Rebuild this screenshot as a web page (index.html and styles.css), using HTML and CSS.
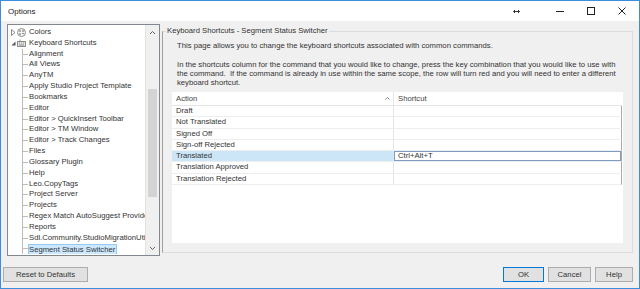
FILE: index.html
```html
<!DOCTYPE html>
<html lang="en">
<head>
    <meta charset="UTF-8">
    <meta name="viewport" content="width=device-width, initial-scale=1.0">
    <title>Options</title>
    <link rel="stylesheet" href="styles.css">
</head>
<body>
    <div class="window">
        <div class="titlebar">
            <span class="title">Options</span>
            <span class="pin">
                <svg width="7" height="5" viewBox="0 0 7 5"><path d="M0.5 2.5h6M2 1L0.5 2.5 2 4M5 1l1.5 1.5L5 4" stroke="#333" fill="none"/></svg>
            </span>
            <span class="cap-btn">
                <svg width="8" height="8" viewBox="0 0 8 8"><path d="M0 4.5h8" stroke="#222"/></svg>
            </span>
            <span class="cap-btn">
                <svg width="8" height="8" viewBox="0 0 8 8"><rect x="0.5" y="0.5" width="7" height="7" stroke="#222" fill="none"/></svg>
            </span>
            <span class="cap-btn">
                <svg width="8" height="8" viewBox="0 0 8 8"><path d="M0.5 0.5l7 7M7.5 0.5l-7 7" stroke="#222"/></svg>
            </span>
        </div>

        <div class="main">
            <div class="tree">
                <ul class="tree-list">
                    <li class="node">
                        <span class="exp"><svg width="5" height="7" viewBox="0 0 5 7"><path d="M0.5 0.5L4 3.5 0.5 6.5Z" stroke="#8a8a8a" fill="none"/></svg></span>
                        <span class="ico"><svg width="9" height="9" viewBox="0 0 9 9"><circle cx="4.5" cy="4.5" r="4" stroke="#8c8c8c" fill="#f4f4f4"/><circle cx="3" cy="3" r="0.9" fill="#8c8c8c"/><circle cx="6" cy="3" r="0.9" fill="#8c8c8c"/><circle cx="3" cy="6" r="0.9" fill="#8c8c8c"/><path d="M5 5.5h2" stroke="#8c8c8c"/></svg></span>
                        <span>Colors</span>
                    </li>
                    <li class="node">
                        <span class="exp"><svg width="5" height="7" viewBox="0 0 5 7"><path d="M4.5 1.5V5.5H0.5Z" fill="#555"/></svg></span>
                        <span class="ico"><svg width="9" height="8" viewBox="0 0 9 8"><path d="M3 0.5v2" stroke="#999"/><rect x="0.5" y="2.5" width="8" height="5" stroke="#8c8c8c" fill="#e6e6e6"/><path d="M2 4h1M4 4h1M6 4h1M2 6h5" stroke="#8c8c8c"/></svg></span>
                        <span>Keyboard Shortcuts</span>
                    </li>
                    <li class="leaf">Alignment</li>
                    <li class="leaf">All Views</li>
                    <li class="leaf">AnyTM</li>
                    <li class="leaf">Apply Studio Project Template</li>
                    <li class="leaf">Bookmarks</li>
                    <li class="leaf">Editor</li>
                    <li class="leaf">Editor &gt; QuickInsert Toolbar</li>
                    <li class="leaf">Editor &gt; TM Window</li>
                    <li class="leaf">Editor &gt; Track Changes</li>
                    <li class="leaf">Files</li>
                    <li class="leaf">Glossary Plugin</li>
                    <li class="leaf">Help</li>
                    <li class="leaf">Leo.CopyTags</li>
                    <li class="leaf">Project Server</li>
                    <li class="leaf">Projects</li>
                    <li class="leaf">Regex Match AutoSuggest Provider</li>
                    <li class="leaf">Reports</li>
                    <li class="leaf">Sdl.Community.StudioMigrationUtility</li>
                    <li class="leaf selected"><span class="sel">Segment Status Switcher</span></li>
                </ul>
                <div class="vscroll">
                    <div class="arrow">
                        <svg width="5" height="3" viewBox="0 0 5 3"><path d="M0 3L2.5 0.5 5 3" stroke="#606060" fill="none"/></svg>
                    </div>
                    <div class="track"><div class="thumb"></div></div>
                    <div class="arrow">
                        <svg width="5" height="3" viewBox="0 0 5 3"><path d="M0 0L2.5 2.5 5 0" stroke="#606060" fill="none"/></svg>
                    </div>
                </div>
            </div>

            <fieldset class="page">
                <legend>Keyboard Shortcuts - Segment Status Switcher</legend>
                <p class="intro">This page allows you to change the keyboard shortcuts associated with common commands.</p>
                <p class="help">In the shortcuts column for the command that you would like to change, press the key combination that you would like to use with<br>the command.&nbsp; If the command is already in use within the same scope, the row will turn red and you will need to enter a different<br>keyboard shortcut.</p>
                <div class="grid">
                    <table>
                        <thead>
                            <tr>
                                <th class="act">Action<svg class="sort" width="5" height="3" viewBox="0 0 5 3"><path d="M0.5 2.5L2.5 0.5 4.5 2.5" stroke="#888" fill="none"/></svg></th>
                                <th class="key">Shortcut</th>
                            </tr>
                        </thead>
                        <tbody>
                            <tr><td class="act">Draft</td><td class="key"></td></tr>
                            <tr><td class="act">Not Translated</td><td class="key"></td></tr>
                            <tr><td class="act">Signed Off</td><td class="key"></td></tr>
                            <tr><td class="act">Sign-off Rejected</td><td class="key"></td></tr>
                            <tr class="current"><td class="act">Translated</td><td class="key editing">Ctrl+Alt+T</td></tr>
                            <tr><td class="act">Translation Approved</td><td class="key"></td></tr>
                            <tr><td class="act">Translation Rejected</td><td class="key"></td></tr>
                        </tbody>
                    </table>
                </div>
            </fieldset>
        </div>

        <div class="footer">
            <button class="btn reset">Reset to Defaults</button>
            <div class="actions">
                <button class="btn ok">OK</button>
                <button class="btn cancel">Cancel</button>
                <button class="btn help-btn">Help</button>
            </div>
        </div>
    </div>
</body>
</html>
```

FILE: styles.css
```css
* {
    box-sizing: border-box;
}

body {
    margin: 0;
    font-family: "Liberation Sans", Arial, sans-serif;
    font-size: 7.7px;
    color: #333;
    background: #fff;
}

.window {
    width: 640px;
    height: 289px;
    border: 1px solid #3b8ddd;
    background: #f0f0f0;
    display: flex;
    flex-direction: column;
}

/* title bar */
.titlebar {
    height: 20px;
    background: #fff;
    display: flex;
    align-items: center;
    padding: 0 2px 0 7px;
}

.title {
    flex: 1;
    font-size: 8px;
    color: #1a1a1a;
}

.pin {
    display: flex;
    margin-right: 24px;
}

.cap-btn {
    width: 31px;
    height: 20px;
    display: flex;
    align-items: center;
    justify-content: center;
}

/* main area */
.main {
    display: flex;
    align-items: flex-start;
    gap: 2px;
    height: 235px;
    padding: 3px 6px 0 6px;
}

.tree {
    width: 153px;
    height: 232px;
    border: 1px solid #828790;
    background: #fff;
    display: flex;
}

.tree-list {
    flex: 1;
    list-style: none;
    margin: 0;
    padding: 2px 0 0 0;
    overflow: hidden;
}

.tree-list li {
    height: 10.83px;
    line-height: 10.83px;
    white-space: nowrap;
    overflow: hidden;
}

.node {
    display: flex;
    align-items: center;
    padding-left: 3px;
}

.exp {
    width: 5px;
    display: flex;
}

.ico {
    width: 9px;
    margin: 0 3px 0 1px;
    display: flex;
}

/* tree connector lines */
.leaf {
    padding-left: 21px;
    background:
        linear-gradient(#bcbcbc, #bcbcbc) 14px 0 / 1px 100% no-repeat,
        linear-gradient(#bcbcbc, #bcbcbc) 14px 50% / 6px 1px no-repeat;
}

.leaf.selected {
    padding-left: 20px;
}

.sel {
    display: inline-block;
    line-height: 9px;
    padding: 0 1px 0 0;
    background: #cce8ff;
    border: 1px solid #99c9ef;
}

.vscroll {
    width: 14px;
    border-left: 1px solid #e3e3e3;
    background: #f0f0f0;
    display: flex;
    flex-direction: column;
}

.arrow {
    height: 14px;
    display: flex;
    align-items: center;
    justify-content: center;
}

.track {
    flex: 1;
    padding: 50px 2px 0 2px;
}

.thumb {
    height: 108px;
    background: #d4d4d4;
}

/* page panel */
.page {
    width: 471px;
    margin: 2px 0 0 0;
    padding: 0 0 9px 0;
    min-width: 0;
    border: 1px solid #dcdcdc;
    border-left-color: #a0a0a0;
}

.page legend {
    margin-left: 3px;
    padding: 0 1px;
    line-height: 10px;
}

.page p {
    margin: 0 0 0 14px;
    line-height: 9px;
    white-space: nowrap;
}

.intro {
    padding-top: 4.5px;
}

.page .help {
    margin-top: 10px;
}

.grid {
    margin: 5.5px 0 0 9px;
    width: 451px;
    height: 151px;
    background: #fff;
}

.grid table {
    width: 450px;
    border-collapse: separate;
    border-spacing: 0;
    table-layout: fixed;
}

.grid th {
    font-weight: normal;
    text-align: left;
    line-height: 13px;
    padding: 0 0 0 4px;
    border-bottom: 1px solid #e5e5e5;
    color: #444;
}

.grid th.act {
    width: 221px;
}

.grid th.key {
    border-left: 1px solid #e5e5e5;
}

.sort {
    float: right;
    margin: 5px 3px 0 0;
}

.grid td {
    line-height: 10.3px;
    padding: 0 0 0 4px;
    border-bottom: 1px solid #eeeeee;
    white-space: nowrap;
}

.grid td.key {
    border-left: 1px solid #e5e5e5;
    border-right: 1px solid #a9a9a9;
}

.current td.act {
    background: #cde6f7;
}

.grid td.editing {
    box-shadow: inset 0 0 0 1px #7d9cc4;
}

/* footer buttons */
.footer {
    display: flex;
    justify-content: space-between;
    align-items: flex-start;
    padding: 11px 6px 0 2px;
}

.actions {
    display: flex;
    gap: 4px;
}

.btn {
    height: 15px;
    padding: 0;
    font-family: inherit;
    font-size: 7.7px;
    color: #333;
    background: #e1e1e1;
    border: 1px solid #adadad;
}

.reset {
    width: 85px;
}

.ok {
    width: 41px;
    border-color: #0078d7;
}

.cancel {
    width: 43px;
}

.help-btn {
    width: 38px;
}
```
